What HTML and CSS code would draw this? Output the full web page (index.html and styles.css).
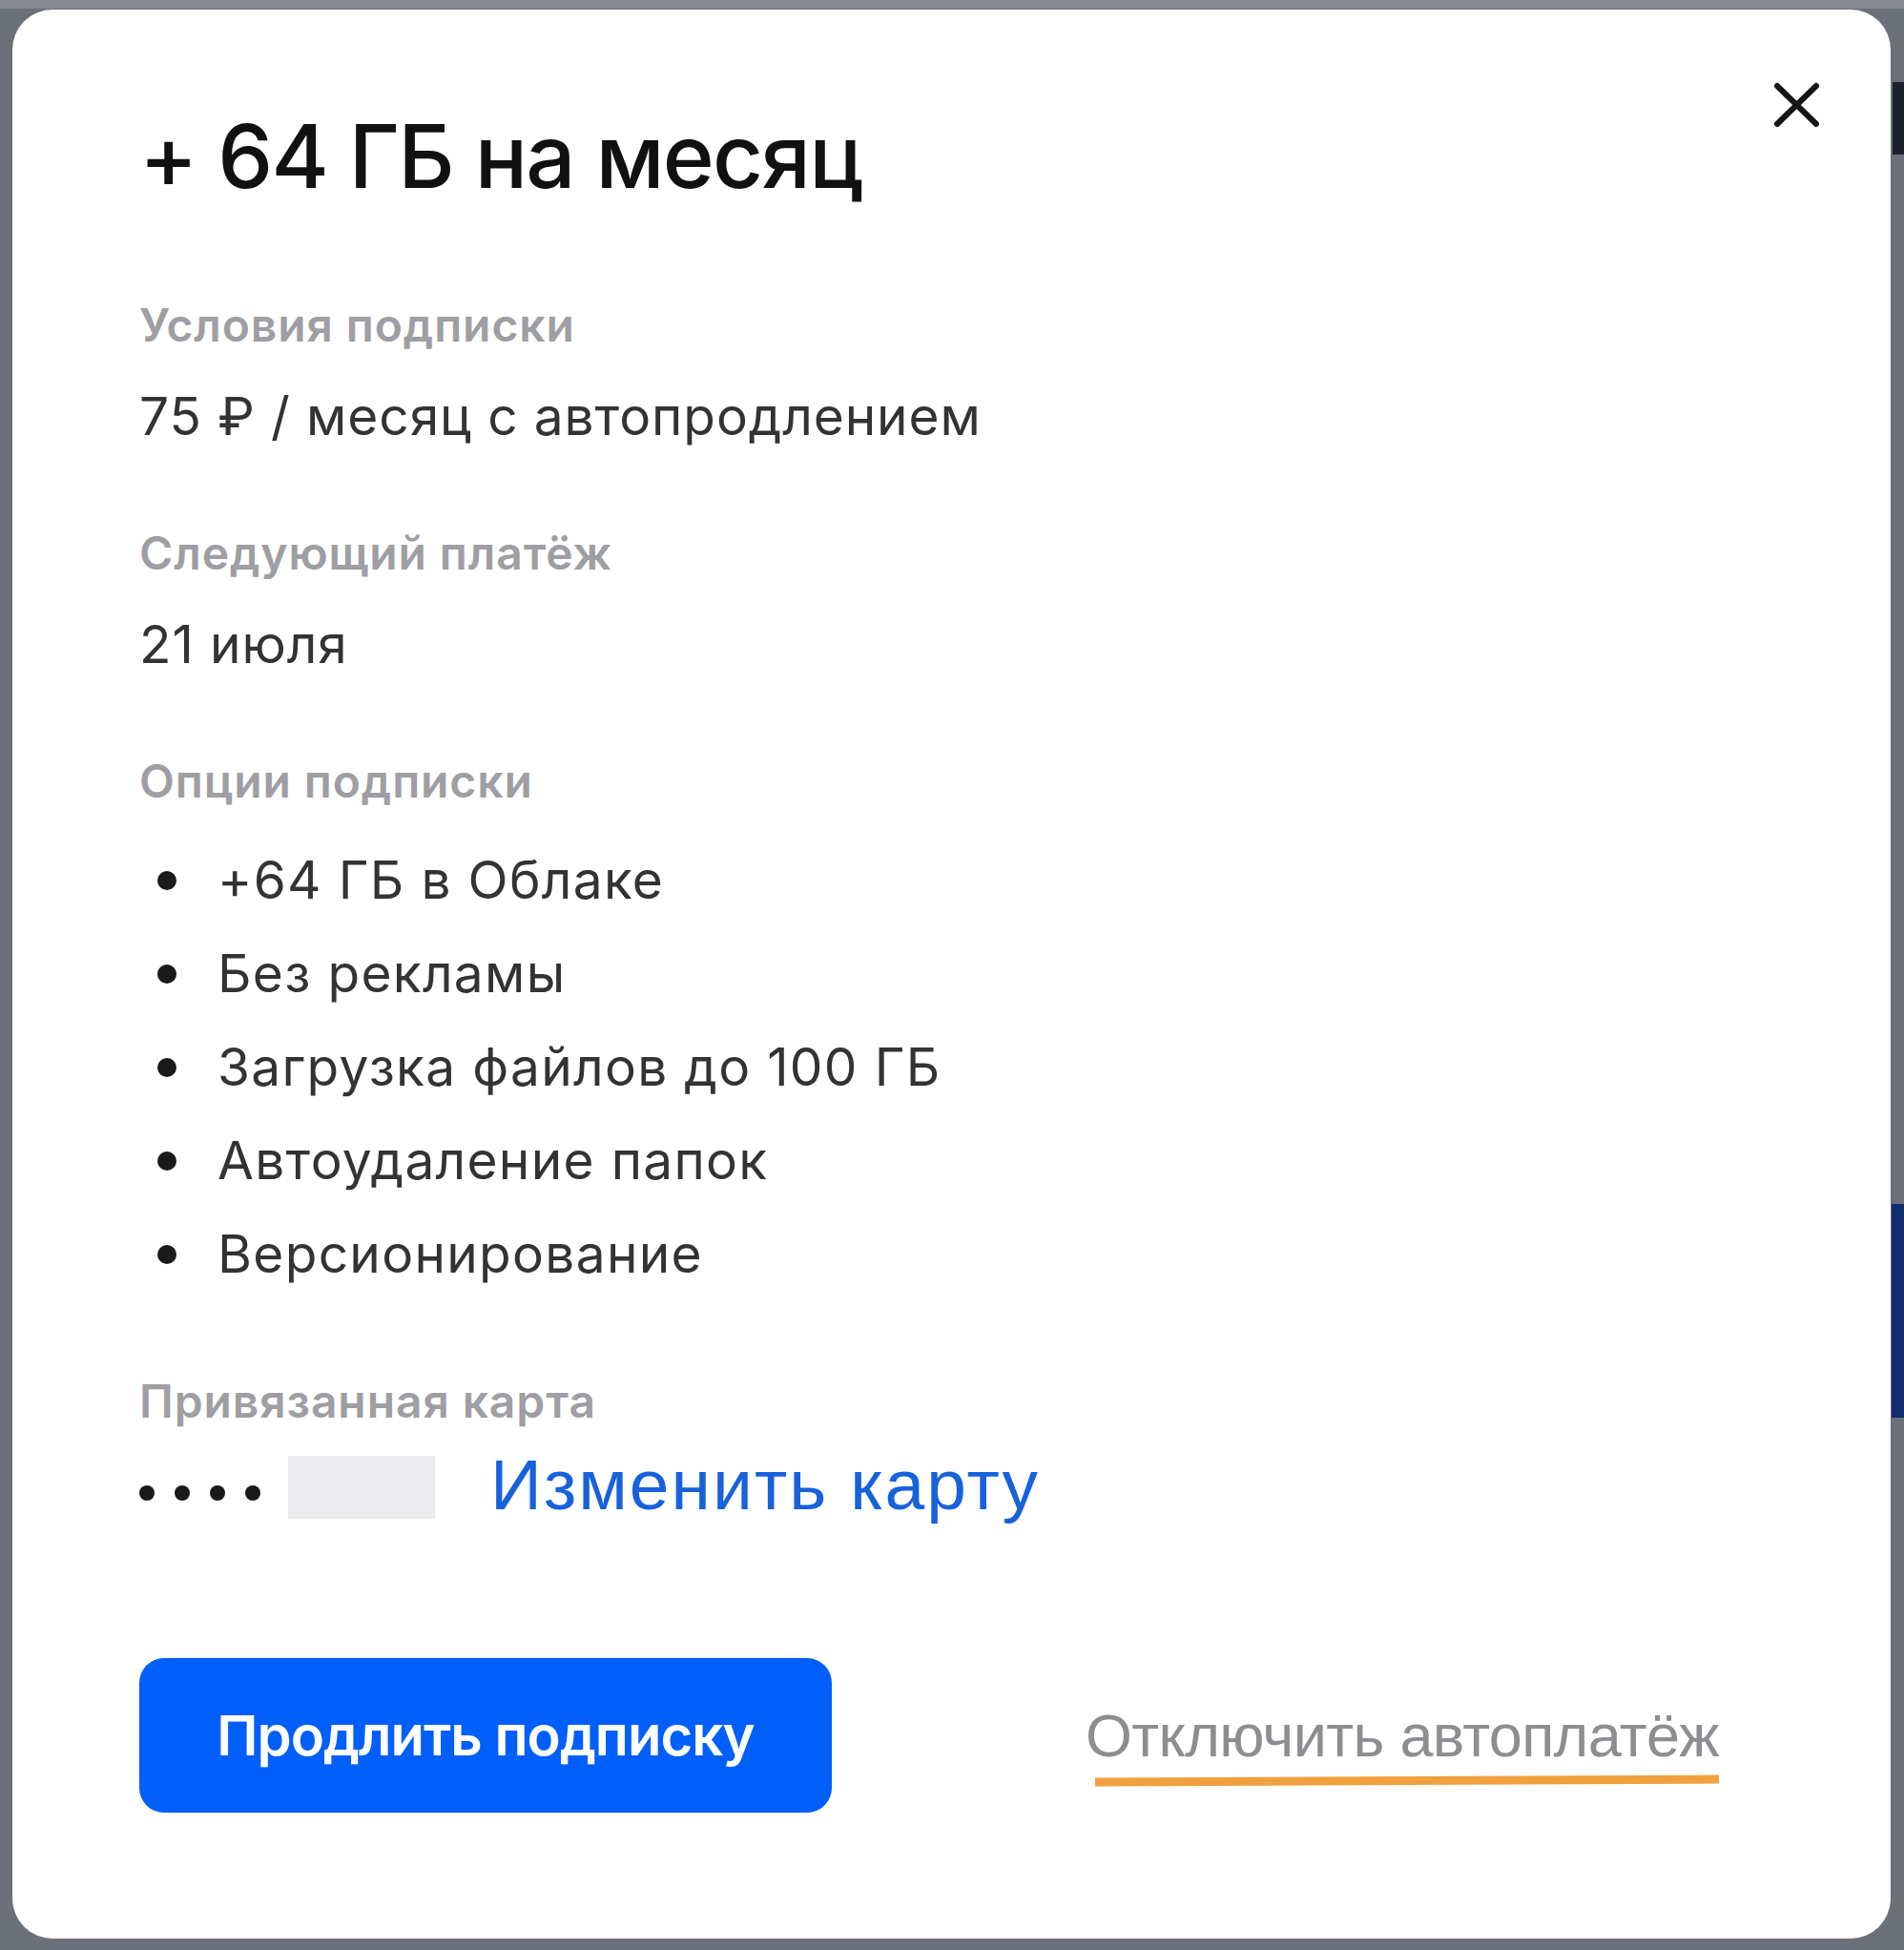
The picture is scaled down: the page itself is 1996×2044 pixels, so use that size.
FILE: index.html
```html
<!DOCTYPE html>
<html lang="ru">
<head>
<meta charset="utf-8">
<title>+ 64 ГБ на месяц</title>
<link rel="stylesheet" href="styles.css">
</head>
<body>
  <div class="backdrop">
    <div class="bg-frag bg-frag-top"></div>
    <div class="bg-frag bg-frag-blue"></div>
  </div>
  <div class="modal">
    <button class="close" aria-label="Закрыть">
      <svg width="51" height="50" viewBox="0 0 51 50"><path d="M5 5 L46 45 M46 5 L5 45" stroke="#151515" stroke-width="6" stroke-linecap="round" fill="none"/></svg>
    </button>
    <h1 class="title">+ 64 ГБ на месяц</h1>

    <section class="section first">
      <div class="label">Условия подписки</div>
      <div class="value">75 ₽ / месяц с автопродлением</div>
    </section>

    <section class="section">
      <div class="label">Следующий платёж</div>
      <div class="value">21 июля</div>
    </section>

    <section class="section">
      <div class="label">Опции подписки</div>
      <ul class="options">
        <li>+64 ГБ в Облаке</li>
        <li>Без рекламы</li>
        <li>Загрузка файлов до 100 ГБ</li>
        <li>Автоудаление папок</li>
        <li>Версионирование</li>
      </ul>
    </section>

    <section class="section card-section">
      <div class="label">Привязанная карта</div>
      <div class="card-row">
        <div class="dots"><span class="dot"></span><span class="dot"></span><span class="dot"></span><span class="dot"></span></div>
        <div class="card-mask"></div>
        <a class="change-link" href="#">Изменить карту</a>
      </div>
    </section>

    <div class="actions">
      <button class="btn-primary">Продлить подписку</button>
      <a class="autopay" href="#">Отключить автоплатёж</a>
    </div>
  </div>
</body>
</html>
```
FILE: styles.css
```css
* {
  box-sizing: border-box;
  margin: 0;
  padding: 0;
}

html, body {
  width: 1996px;
  height: 2044px;
  overflow: hidden;
}

body {
  position: relative;
  background: linear-gradient(#878a91 0, #878a91 9px, #6c7079 9px);
  font-family: Inter, "Noto Sans", sans-serif;
}

.backdrop {
  position: absolute;
  inset: 0;
}

.bg-frag {
  position: absolute;
}

.bg-frag-top {
  left: 1984px;
  top: 86px;
  width: 12px;
  height: 76px;
  background: #1c2130;
}

.bg-frag-blue {
  left: 1983px;
  top: 1262px;
  width: 13px;
  height: 224px;
  background: #102c6e;
}

.modal {
  position: relative;
  margin: 10px 0 0 13px;
  width: 1969px;
  height: 2022px;
  background: #fff;
  border-radius: 42px;
  padding: 97px 0 0 133px;
}

.close {
  position: absolute;
  top: 75px;
  right: 73px;
  width: 51px;
  height: 50px;
  border: none;
  background: none;
  display: block;
}

.close svg {
  display: block;
}

.title {
  font-size: 92px;
  line-height: 114px;
  font-weight: 500;
  letter-spacing: -1.8px;
  color: #111;
}

.section {
  margin-top: 79px;
}

.section.first {
  margin-top: 90px;
}

.label {
  font-size: 48px;
  line-height: 60px;
  font-weight: 600;
  letter-spacing: 0.9px;
  color: #9e9ea3;
}

.value {
  margin-top: 30px;
  font-size: 55px;
  line-height: 70px;
  letter-spacing: 0.9px;
  color: #333;
}

.options {
  list-style: none;
  margin-top: 24px;
}

.options li {
  position: relative;
  font-size: 55px;
  line-height: 98px;
  letter-spacing: 1.3px;
  color: #333;
  padding-left: 82px;
}

.options li::before {
  content: "";
  position: absolute;
  left: 19px;
  top: 40px;
  width: 20px;
  height: 20px;
  border-radius: 50%;
  background: #1a1a1a;
}

.card-section {
  margin-top: 76px;
}

.card-row {
  display: flex;
  align-items: flex-start;
  margin-top: 15px;
  height: 84px;
}

.dots {
  display: flex;
  gap: 21px;
  margin-top: 43px;
}

.dot {
  width: 16px;
  height: 16px;
  border-radius: 50%;
  background: #1a1a1a;
}

.card-mask {
  width: 154px;
  height: 66px;
  margin-top: 12px;
  margin-left: 29px;
  background: #ececee;
}

.change-link {
  margin-left: 58px;
  font-family: "Liberation Sans", Arial, sans-serif;
  font-size: 75px;
  line-height: 84px;
  letter-spacing: 2px;
  color: #1762db;
  text-decoration: none;
}

.actions {
  display: flex;
  align-items: center;
  margin-top: 140px;
}

.btn-primary {
  width: 726px;
  height: 162px;
  border: none;
  border-radius: 26px;
  background: #005ff9;
  color: #fff;
  font-family: Inter, "Noto Sans", sans-serif;
  font-size: 58px;
  font-weight: 600;
  letter-spacing: -1px;
}

.autopay {
  position: relative;
  margin-left: 266px;
  font-family: "Liberation Sans", Arial, sans-serif;
  font-size: 63px;
  line-height: 72px;
  letter-spacing: -0.65px;
  color: #8d8d92;
  text-decoration: none;
}

.autopay::after {
  content: "";
  position: absolute;
  left: 10px;
  right: 0;
  top: 79px;
  height: 9px;
  background: #f0a03c;
  transform: rotate(-0.25deg);
}
```
